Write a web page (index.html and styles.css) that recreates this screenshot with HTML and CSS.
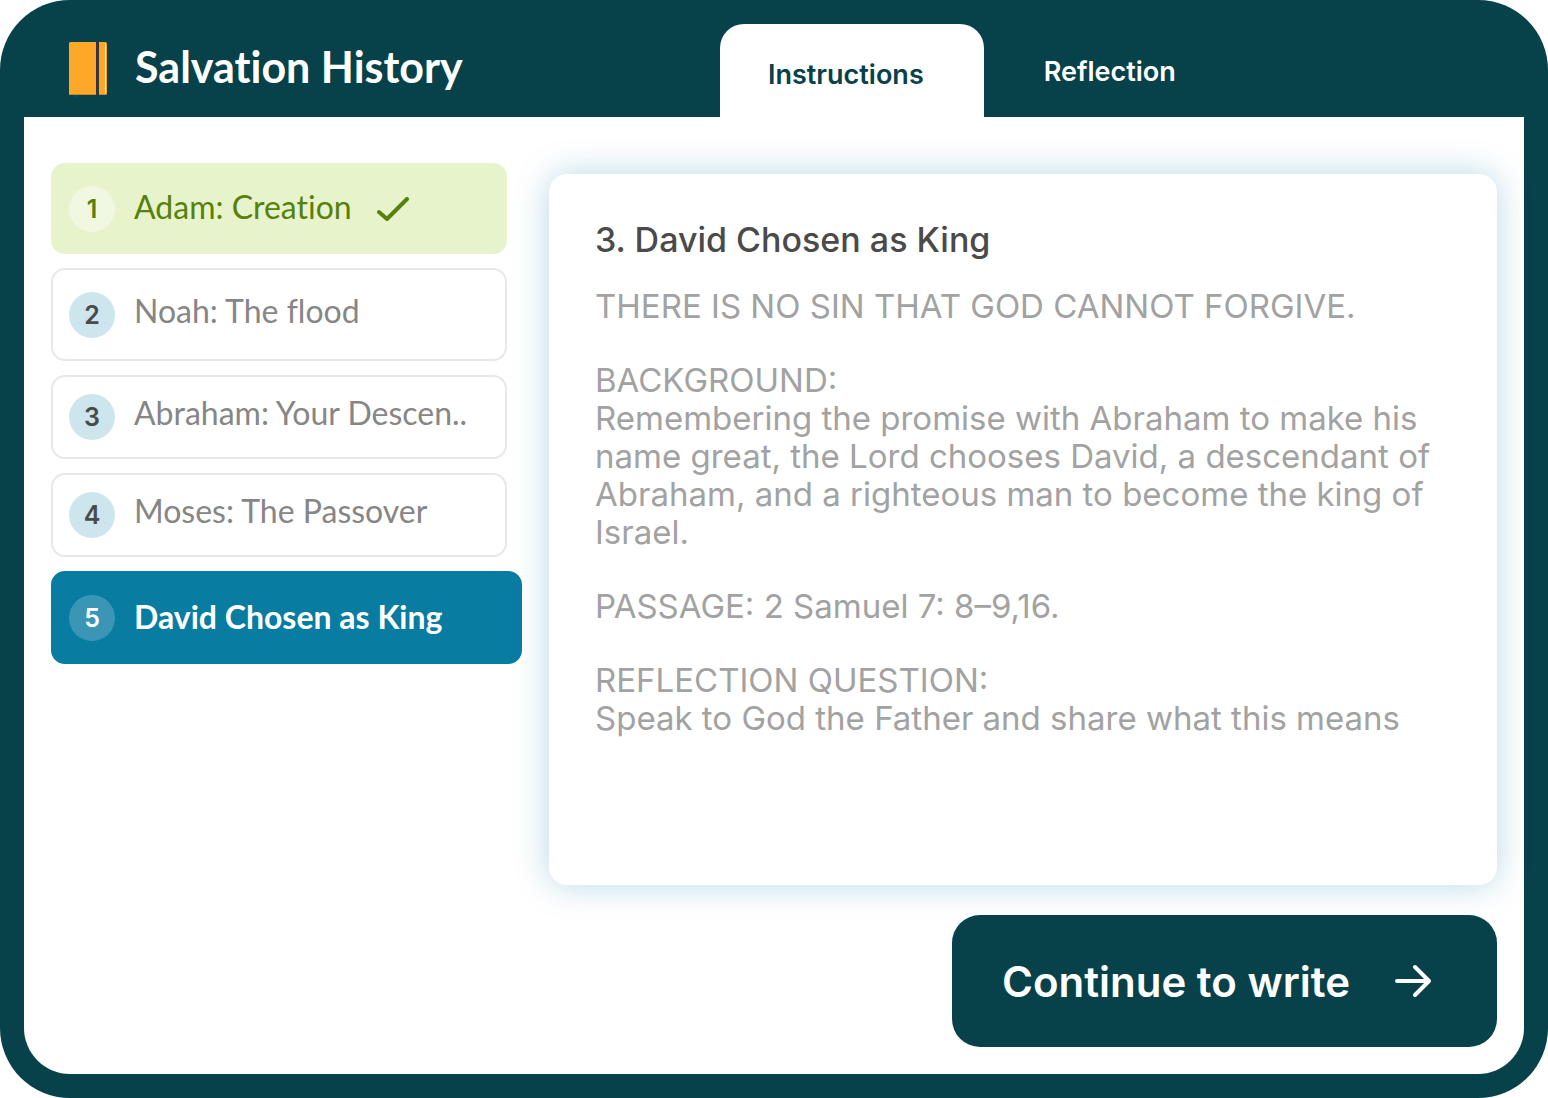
FILE: index.html
```html
<!DOCTYPE html>
<html lang="en">
<head>
<meta charset="utf-8">
<meta name="viewport" content="width=device-width, initial-scale=1">
<title>Salvation History</title>
<link rel="stylesheet" href="styles.css">
</head>
<body>
<div class="frame">
  <header class="header">
    <div class="brand">
      <svg class="brand-icon" viewBox="0 0 38 58" aria-hidden="true">
        <path d="M5 52h5v5l-2-2-3 2z" fill="#044c63"/>
        <path d="M1 0h26v53H1l-1-1V1z" fill="#ffa726"/>
        <path d="M30 0h6q2 0 2 2v49q0 2-2 2h-6z" fill="#ffa726"/>
        <path d="M27 0h3v53h-3z" fill="#37353b"/>
        <path d="M0 52h27v1H1zM30 52h7l-1 1h-6z" fill="#c98b2c"/>
        <path d="M36 1q1 0 1 2v47q0 2-1 2z" fill="#fff3dc"/>
      </svg>
      <h1 class="title">Salvation History</h1>
    </div>
    <nav class="tabs" aria-label="Sections">
      <button class="tab tab-active" type="button">Instructions</button>
      <button class="tab" type="button">Reflection</button>
    </nav>
  </header>
  <main class="main">
    <ol class="steps">
      <li><button class="step step-done" type="button"><span class="badge">1</span><span class="label">Adam: Creation</span>
        <svg class="check" viewBox="0 0 32 24" aria-hidden="true"><path d="M2 15l8 7L30 2" fill="none" stroke="currentColor" stroke-width="4" stroke-linecap="round" stroke-linejoin="round"/></svg></button></li>
      <li><button class="step step-tall" type="button"><span class="badge">2</span><span class="label">Noah: The flood</span></button></li>
      <li><button class="step" type="button"><span class="badge">3</span><span class="label">Abraham: Your Descen..</span></button></li>
      <li><button class="step" type="button"><span class="badge">4</span><span class="label">Moses: The Passover</span></button></li>
      <li><button class="step step-current" type="button"><span class="badge">5</span><span class="label">David Chosen as King</span></button></li>
    </ol>
    <section class="content">
      <article class="panel">
        <h2 class="panel-title">3. David Chosen as King</h2>
        <div class="prose">
          <p>THERE IS NO SIN THAT GOD CANNOT FORGIVE.</p>
          <p>BACKGROUND:<br>Remembering the promise with Abraham to make his name great, the Lord chooses David, a descendant of Abraham, and a righteous man to become the king of Israel.</p>
          <p>PASSAGE: 2 Samuel 7: 8–9,16.</p>
          <p>REFLECTION QUESTION:<br>Speak to God the Father and share what this means</p>
        </div>
      </article>
      <button class="continue" type="button">Continue to write
        <svg class="arrow" viewBox="0 0 38 34" aria-hidden="true"><path d="M3 17h32M21 3l14 14-14 14" fill="none" stroke="currentColor" stroke-width="4" stroke-linecap="round" stroke-linejoin="round"/></svg>
      </button>
    </section>
  </main>
</div>
</body>
</html>
```
FILE: styles.css
```css
*, *::before, *::after { box-sizing: border-box; }

body {
  margin: 0;
  background: #fff;
  font-family: Inter, "Liberation Sans", sans-serif;
}

button {
  margin: 0;
  border: 0;
  background: none;
  font: inherit;
  color: inherit;
  cursor: pointer;
}

.frame {
  display: flex;
  flex-direction: column;
  min-height: 100vh;
  padding: 24px;
  border-radius: 70px;
  background: #07414a;
}

.header {
  display: grid;
  grid-template-columns: 58fr 67fr;
  height: 93px;
  color: #fff;
}

.brand {
  display: flex;
  align-items: center;
  gap: 28px;
  padding-left: 45px;
}

.brand-icon { width: 38px; height: 58px; }

.title {
  margin: 0;
  padding-bottom: 8px;
  font-family: Lato, sans-serif;
  font-size: 43px;
  font-weight: 700;
  font-variant-ligatures: none;
  line-height: 48px;
  white-space: nowrap;
}

.tabs { display: flex; gap: 12px; }

.tab {
  padding: 2px 48px 0;
  border-radius: 24px 24px 0 0;
  font-size: 27px;
  font-weight: 600;
  white-space: nowrap;
}

.tab-active {
  padding: 8px 60px 0 48px;
  background: #fff;
  color: #07414a;
}

.main {
  flex: 1;
  display: grid;
  grid-template-columns: minmax(0, 157fr) minmax(0, 316fr);
  gap: 27px;
  padding: 46px 27px 27px;
  border-radius: 0 0 46px 46px;
  background: #fff;
}

.steps {
  display: flex;
  flex-direction: column;
  gap: 14px;
  margin: 0;
  padding: 0;
  list-style: none;
}

.steps li { display: flex; padding-right: 15px; }
.steps li:last-child { padding-right: 0; }

.step {
  flex: 1;
  min-width: 0;
  display: flex;
  align-items: center;
  height: 84px;
  padding: 0 16px;
  border: 2px solid #e8e8e8;
  border-radius: 14px;
  background: #fff;
  color: #868686;
  font-family: Lato, sans-serif;
  font-size: 32px;
  font-variant-ligatures: none;
  line-height: 36px;
  text-align: left;
}

.badge {
  flex: none;
  width: 46px;
  margin-right: 19px;
  border-radius: 50%;
  background: #cde5ed;
  color: #4a4a4a;
  font-family: Inter, sans-serif;
  font-size: 25px;
  font-weight: 600;
  line-height: 46px;
  text-align: center;
}

.label { padding-bottom: 8px; white-space: nowrap; }

.step-tall { height: 93px; }

.step-done {
  height: 91px;
  border-color: #e7f4cb;
  background: #e7f4cb;
  color: #57800c;
}
.step-done .badge { background: #f1f8e1; color: #57800c; }
.step-done .label { padding-bottom: 4px; }

.step-current {
  height: 93px;
  border-color: #087ca1;
  background: #087ca1;
  color: #fff;
  font-weight: 700;
}
.step-current .badge { background: #3a96b4; color: #fff; }
.step-current .label { padding-bottom: 2px; }

.check { width: 32px; height: 24px; margin-left: 25px; }

.content {
  display: flex;
  flex-direction: column;
  gap: 30px;
  padding-top: 11px;
}

.panel {
  flex: 1;
  padding: 44px 46px;
  border-radius: 18px;
  background: #fff;
  box-shadow: 0 0 34px rgba(8, 124, 170, 0.29);
}

.panel-title {
  margin: 0 0 25px;
  color: #4a4a4a;
  font-size: 34px;
  font-weight: 500;
  line-height: 44px;
}

.prose {
  color: #a2a2a2;
  font-size: 33px;
  line-height: 38px;
}
.prose p { margin: 0 0 36px; }

.continue {
  align-self: flex-end;
  display: flex;
  align-items: center;
  gap: 44px;
  height: 132px;
  padding: 0 65px 0 50px;
  border-radius: 28px;
  background: #07414a;
  color: #fff;
  font-size: 42px;
  font-weight: 600;
  white-space: nowrap;
}

.arrow { width: 38px; height: 34px; }
```
